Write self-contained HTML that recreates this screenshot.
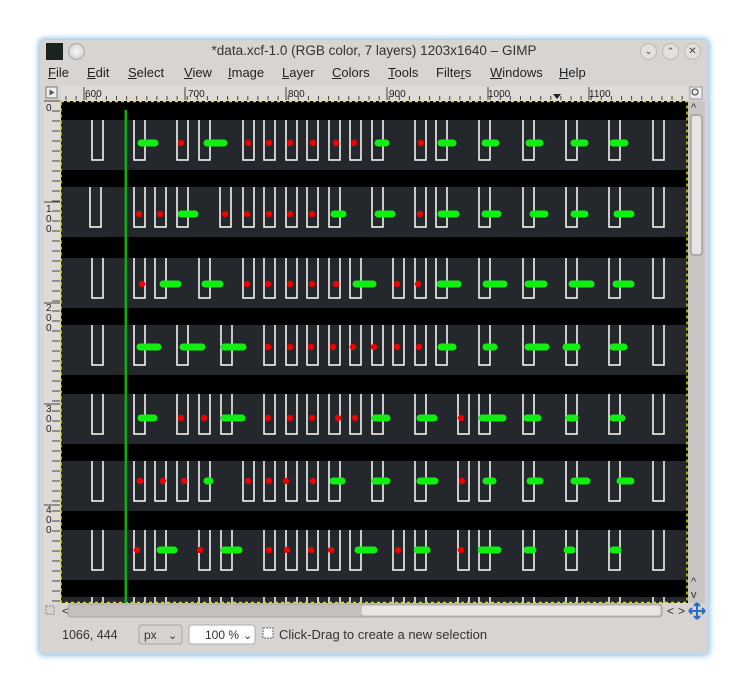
<!DOCTYPE html>
<html><head><meta charset="utf-8"><style>
body{margin:0;width:748px;height:692px;background:#fff;position:relative;overflow:hidden;font-family:"Liberation Sans","DejaVu Sans",sans-serif;}
#win{position:absolute;left:40px;top:40px;width:668px;height:614px;background:#d8d4d2;border-radius:4px;box-shadow:0 0 6px 2px #8fc3e6;}
.t{position:absolute;font-size:13px;color:#222;white-space:nowrap}
.m{position:absolute;top:25px;font-size:13px;color:#222}
.m u{text-decoration:underline}
</style></head><body>
<div id="win">
<div style="position:absolute;left:6px;top:3px;width:17px;height:17px;background:#1b2220"></div>
<div style="position:absolute;left:28px;top:3px;width:15px;height:15px;border-radius:50%;background:radial-gradient(#fafafa,#c8c4c2);border:1px solid #aaa"></div>
<div class="t" style="left:0;width:668px;text-align:center;top:3px;font-size:13.5px;color:#333">*data.xcf-1.0 (RGB color, 7 layers) 1203x1640 – GIMP</div>
<div style="position:absolute;left:600px;top:3px;width:15px;height:15px;border-radius:50%;background:#e4e0de;border:1px solid #bbb;font-size:9px;text-align:center;line-height:15px;color:#444">⌄</div>
<div style="position:absolute;left:622px;top:3px;width:15px;height:15px;border-radius:50%;background:#e4e0de;border:1px solid #bbb;font-size:9px;text-align:center;line-height:15px;color:#444">⌃</div>
<div style="position:absolute;left:644px;top:3px;width:15px;height:15px;border-radius:50%;background:#e4e0de;border:1px solid #bbb;font-size:10px;text-align:center;line-height:15px;color:#444">✕</div>
<div class="m" style="left:8px"><u>F</u>ile</div>
<div class="m" style="left:47px"><u>E</u>dit</div>
<div class="m" style="left:88px"><u>S</u>elect</div>
<div class="m" style="left:144px"><u>V</u>iew</div>
<div class="m" style="left:188px"><u>I</u>mage</div>
<div class="m" style="left:242px"><u>L</u>ayer</div>
<div class="m" style="left:292px"><u>C</u>olors</div>
<div class="m" style="left:348px"><u>T</u>ools</div>
<div class="m" style="left:396px">Filte<u>r</u>s</div>
<div class="m" style="left:450px"><u>W</u>indows</div>
<div class="m" style="left:519px"><u>H</u>elp</div>
</div>
<svg width="748" height="692" style="position:absolute;left:0;top:0" id="s" xmlns="http://www.w3.org/2000/svg" font-family="Liberation Sans, sans-serif">
<rect x="44" y="86" width="16" height="14" fill="#d8d4d2"/>
<rect x="46" y="87" width="11" height="11" fill="#eee" stroke="#777"/>
<path d="M49.5 89.5 L54.5 92.5 L49.5 95.5Z" fill="#555"/>
<rect x="61" y="86" width="627" height="15" fill="#dedad8"/>
<rect x="44" y="101" width="16" height="502" fill="#dedad8"/>
<g id="hr"></g><g id="vr"></g>
<text x="85" y="97" font-size="10" fill="#222">600</text>
<text x="188" y="97" font-size="10" fill="#222">700</text>
<text x="288" y="97" font-size="10" fill="#222">800</text>
<text x="389" y="97" font-size="10" fill="#222">900</text>
<text x="488" y="97" font-size="10" fill="#222">1000</text>
<text x="589" y="97" font-size="10" fill="#222">1100</text>
<path d="M553 94 h8 l-4 5z" fill="#222"/>
<g font-size="10" fill="#222"><text x="46" y="111">0</text>
<text x="46" y="212">1</text><text x="46" y="222">0</text><text x="46" y="232">0</text>
<text x="46" y="311">2</text><text x="46" y="321">0</text><text x="46" y="331">0</text>
<text x="46" y="412">3</text><text x="46" y="422">0</text><text x="46" y="432">0</text>
<text x="46" y="513">4</text><text x="46" y="523">0</text><text x="46" y="533">0</text></g>
<rect x="61" y="101" width="627" height="502" fill="#000"/>
<g id="cv"></g>
<rect x="61" y="101.5" width="626" height="501" fill="none" stroke="#e8d800" stroke-width="1.5" stroke-dasharray="3,3"/>
<rect x="124.5" y="110" width="2.5" height="493" fill="#15a815"/>
<rect x="688" y="101" width="17" height="502" fill="#c9c5c3"/>
<text x="691" y="111" font-size="11" fill="#333">^</text>
<rect x="691" y="115" width="11" height="140" rx="3" fill="#e6e3e1" stroke="#8a8786"/>
<text x="691" y="585" font-size="11" fill="#333">^</text>
<text x="691" y="598" font-size="11" fill="#333">v</text>
<rect x="690" y="87" width="12" height="12" fill="#eee" stroke="#999"/>
<circle cx="695" cy="92" r="3" fill="none" stroke="#333"/>
<rect x="46" y="606" width="8" height="8" fill="none" stroke="#888" stroke-dasharray="2,1"/>
<text x="62" y="615" font-size="12" fill="#333">&lt;</text>
<rect x="68" y="604" width="594" height="13" rx="3" fill="#c4c0be" stroke="#a9a5a3"/>
<rect x="361" y="605" width="300" height="11" rx="3" fill="#e8e6e4" stroke="#b8b4b2"/>
<text x="667" y="615" font-size="12" fill="#333">&lt;</text><text x="678" y="615" font-size="12" fill="#333">&gt;</text>
<path d="M697 603 v16 M689 611 h16 M697 603 l-3 3 M697 603 l3 3 M697 619 l-3 -3 M697 619 l3 -3 M689 611 l3 -3 M689 611 l3 3 M705 611 l-3 -3 M705 611 l-3 3" stroke="#2a6ac8" stroke-width="2" fill="none"/>
<text x="62" y="639" font-size="12.5" fill="#333">1066, 444</text>
<rect x="139" y="625" width="43" height="19" rx="3" fill="#d6d2d0" stroke="#a8a4a2"/>
<text x="144" y="639" font-size="12" fill="#333">px</text><text x="168" y="639" font-size="11" fill="#333">⌄</text>
<rect x="189" y="625" width="66" height="19" rx="3" fill="#fff" stroke="#b0acaa"/>
<text x="205" y="639" font-size="12" fill="#333">100 %</text><text x="243" y="639" font-size="11" fill="#333">⌄</text>
<rect x="263" y="628" width="10" height="10" fill="#fff" stroke="#666" stroke-dasharray="2,1"/>
<text x="279" y="639" font-size="13" fill="#333">Click-Drag to create a new selection</text>
</svg>
<script>
var ns="http://www.w3.org/2000/svg";
function el(p,t,a){var e=document.createElementNS(ns,t);for(var k in a)e.setAttribute(k,a[k]);document.getElementById(p).appendChild(e);return e;}
for(var x=66;x<687;x+=10.1){var big=Math.abs(((x-84)%101))<2;el("hr","line",{x1:x,y1:big?87:96,x2:x,y2:100,stroke:"#444","stroke-width":1});}
for(var i=0;i<6;i++){el("hr","line",{x1:84+i*101,y1:87,x2:84+i*101,y2:100,stroke:"#444"});}
for(var y=101;y<603;y+=10){el("vr","line",{x1:52,y1:y,x2:60,y2:y,stroke:"#444"});}
for(var i=0;i<5;i++){el("vr","line",{x1:44,y1:101+i*101,x2:60,y2:101+i*101,stroke:"#444"});}
var tops=[120,187,258,325,394,461,530];
var us=[[92,134,177,199,243,264,286,307,329,350,372,415,436,479,523,566,609,653],
[90,134,155,177,220,243,264,286,307,329,372,415,436,479,523,566,609,653],
[92,134,155,199,243,264,286,307,329,350,393,415,436,479,523,566,609,653],
[92,134,177,221,264,286,307,329,350,372,393,415,436,479,523,566,609,653],
[92,134,177,199,221,264,286,307,329,350,372,415,458,479,523,566,609,653],
[92,134,155,177,199,243,264,286,307,329,372,415,458,479,523,566,609,653],
[92,134,155,199,221,264,286,307,329,350,393,415,458,479,523,566,609,653]];
var dy=[143,214,284,347,418,481,550];
var dots=[
[[138,158],181,[204,227],248,269,290,313,336,354,[375,389],421,[438,456],[482,499],[526,543],[571,588],[610,628]],
[139,160,[178,198],225,247,269,290,312,[331,346],[375,395],420,[438,459],[482,501],[530,548],[571,588],[614,634]],
[142,[160,181],[202,223],247,268,290,312,336,[353,376],397,418,[437,461],[483,507],[525,547],[569,594],[613,634]],
[[137,161],[180,205],[221,246],268,290,311,333,353,374,397,419,[438,456],[483,497],[525,549],[563,580],[610,627]],
[[138,157],181,204,[221,245],268,290,312,338,355,[372,390],[417,437],461,[479,506],[524,541],[566,578],[610,625]],
[140,163,184,[204,213],248,269,286,313,[330,345],[372,390],[417,438],462,[483,496],[527,543],[571,590],[617,634]],
[137,[157,177],200,[221,242],269,287,311,331,[355,377],398,[414,430],461,[478,501],[524,536],[564,575],[610,621]]];
tops.forEach(function(t,r){
 el("cv","rect",{x:61,y:t,width:626,height:50,fill:"#24282d"});
 us[r].forEach(function(x){el("cv","path",{d:"M"+x+" "+t+"V"+(t+40)+"H"+(x+11)+"V"+t,stroke:"#fff","stroke-width":1.5,fill:"none"});});
 dots[r].forEach(function(d){
  if(typeof d=="number")el("cv","circle",{cx:d,cy:dy[r],r:3.2,fill:"#f00000"});
  else el("cv","line",{x1:d[0]+3,y1:dy[r],x2:d[1]-3,y2:dy[r],stroke:"#11ee11","stroke-width":7,"stroke-linecap":"round"});
 });
});
el("cv","rect",{x:61,y:597,width:626,height:6,fill:"#24282d"});
us[6].forEach(function(x){el("cv","path",{d:"M"+x+" 597V603M"+(x+11)+" 597V603",stroke:"#fff","stroke-width":1.5});});
</script>
</body></html>
